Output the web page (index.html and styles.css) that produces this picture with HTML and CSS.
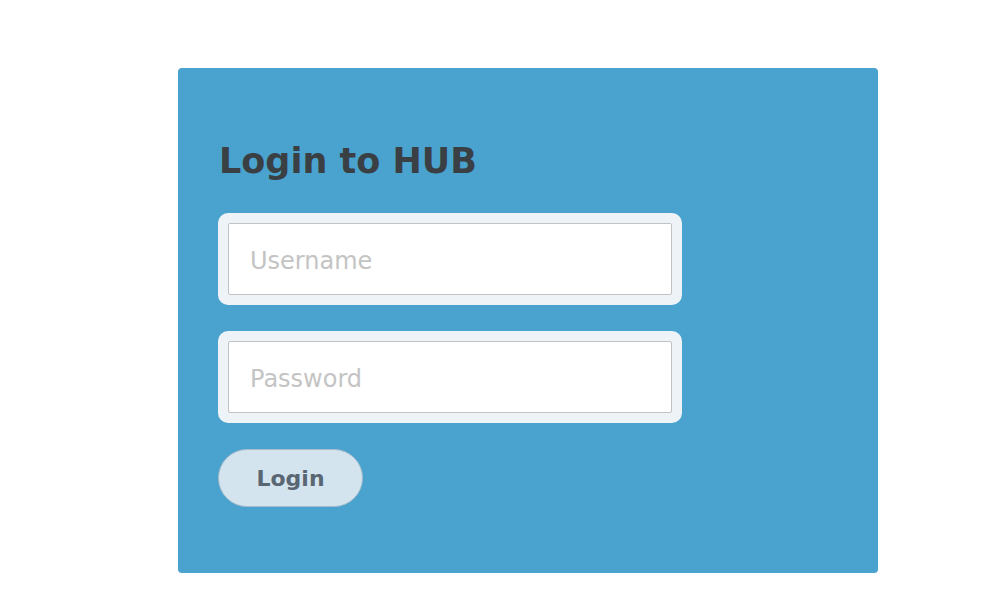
FILE: index.html
```html
<!DOCTYPE html>
<html>
<head>
<meta charset="utf-8">
<link rel="stylesheet" href="styles.css">
</head>
<body>
<div class="page">
  <div class="card">
    <h1 class="title">Login to HUB</h1>
    <div class="field"><input class="input" type="text" placeholder="Username"></div>
    <div class="field"><input class="input" type="password" placeholder="Password"></div>
    <button class="btn">Login</button>
  </div>
</div>
</body>
</html>
```
FILE: styles.css
```css
html, body { margin: 0; padding: 0; background: #ffffff; }
body { font-family: "DejaVu Sans", Verdana, sans-serif; }
.page { padding: 68px 0 0 178px; }
.card {
  width: 700px;
  height: 505px;
  box-sizing: border-box;
  background: #4aa3cf;
  border-radius: 4px;
  padding: 76px 40px 0 40px;
  display: flex;
  flex-direction: column;
  align-items: flex-start;
}
.title {
  margin: 0 0 34px 1px;
  font-size: 35px;
  font-weight: bold;
  color: #3a3f44;
  line-height: 1;
}
.field {
  width: 464px;
  box-sizing: border-box;
  padding: 10px;
  background: #edf3f7;
  border-radius: 10px;
  margin-bottom: 26px;
}
.input {
  display: block;
  width: 100%;
  height: 72px;
  box-sizing: border-box;
  border: 1px solid #c2c2c2;
  border-radius: 2px;
  padding: 4px 21px 0;
  font-family: "DejaVu Sans", Verdana, sans-serif;
  font-size: 24px;
  background: #fff;
  outline: none;
}
.input::placeholder { color: #c4c4c4; }
.btn {
  width: 145px;
  height: 58px;
  border-radius: 29px;
  background: #d3e4ee;
  border: 1px solid #a7bccb;
  font-family: "DejaVu Sans", Verdana, sans-serif;
  font-size: 22px;
  font-weight: bold;
  color: #5a6773;
}
```
